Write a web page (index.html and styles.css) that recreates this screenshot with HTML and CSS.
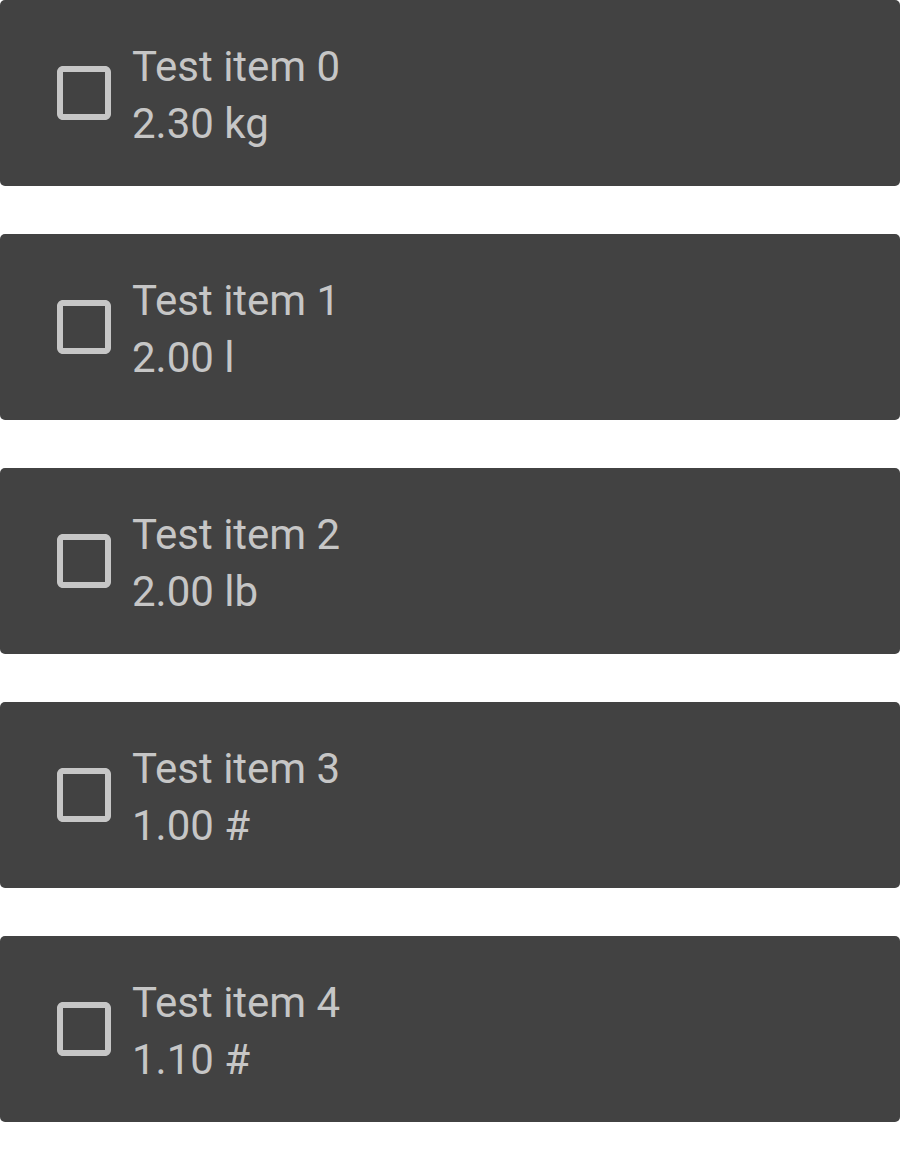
FILE: index.html
```html
<!DOCTYPE html>
<html>
<head>
<meta charset="utf-8">
<link rel="stylesheet" href="styles.css">
</head>
<body>
<div class="list">
  <div class="card">
    <svg class="box" viewBox="0 0 24 24"><path d="M19 5v14H5V5h14m0-2H5c-1.11 0-2 .9-2 2v14c0 1.1.89 2 2 2h14c1.1 0 2-.9 2-2V5c0-1.1-.9-2-2-2z"/></svg>
    <div class="text"><div class="name">Test item 0</div><div class="qty">2.30 kg</div></div>
  </div>
  <div class="card">
    <svg class="box" viewBox="0 0 24 24"><path d="M19 5v14H5V5h14m0-2H5c-1.11 0-2 .9-2 2v14c0 1.1.89 2 2 2h14c1.1 0 2-.9 2-2V5c0-1.1-.9-2-2-2z"/></svg>
    <div class="text"><div class="name">Test item 1</div><div class="qty">2.00 l</div></div>
  </div>
  <div class="card">
    <svg class="box" viewBox="0 0 24 24"><path d="M19 5v14H5V5h14m0-2H5c-1.11 0-2 .9-2 2v14c0 1.1.89 2 2 2h14c1.1 0 2-.9 2-2V5c0-1.1-.9-2-2-2z"/></svg>
    <div class="text"><div class="name">Test item 2</div><div class="qty">2.00 lb</div></div>
  </div>
  <div class="card">
    <svg class="box" viewBox="0 0 24 24"><path d="M19 5v14H5V5h14m0-2H5c-1.11 0-2 .9-2 2v14c0 1.1.89 2 2 2h14c1.1 0 2-.9 2-2V5c0-1.1-.9-2-2-2z"/></svg>
    <div class="text"><div class="name">Test item 3</div><div class="qty">1.00 #</div></div>
  </div>
  <div class="card">
    <svg class="box" viewBox="0 0 24 24"><path d="M19 5v14H5V5h14m0-2H5c-1.11 0-2 .9-2 2v14c0 1.1.89 2 2 2h14c1.1 0 2-.9 2-2V5c0-1.1-.9-2-2-2z"/></svg>
    <div class="text"><div class="name">Test item 4</div><div class="qty">1.10 #</div></div>
  </div>
</div>
</body>
</html>
```
FILE: styles.css
```css
html, body {
  margin: 0;
  padding: 0;
  background: #ffffff;
}
.list {
  display: flex;
  flex-direction: column;
  gap: 48px;
}
.card {
  height: 186px;
  box-sizing: border-box;
  background: #424242;
  border-radius: 5px;
  display: flex;
  align-items: center;
  padding-left: 48px;
  gap: 12px;
}
.box {
  width: 72px;
  height: 72px;
  flex: none;
  fill: #c6c6c6;
}
.text {
  font-family: Roboto, "Noto Sans", sans-serif;
  font-size: 42px;
  line-height: 57px;
  color: #c6c6c6;
  padding-top: 4px;
}
```
